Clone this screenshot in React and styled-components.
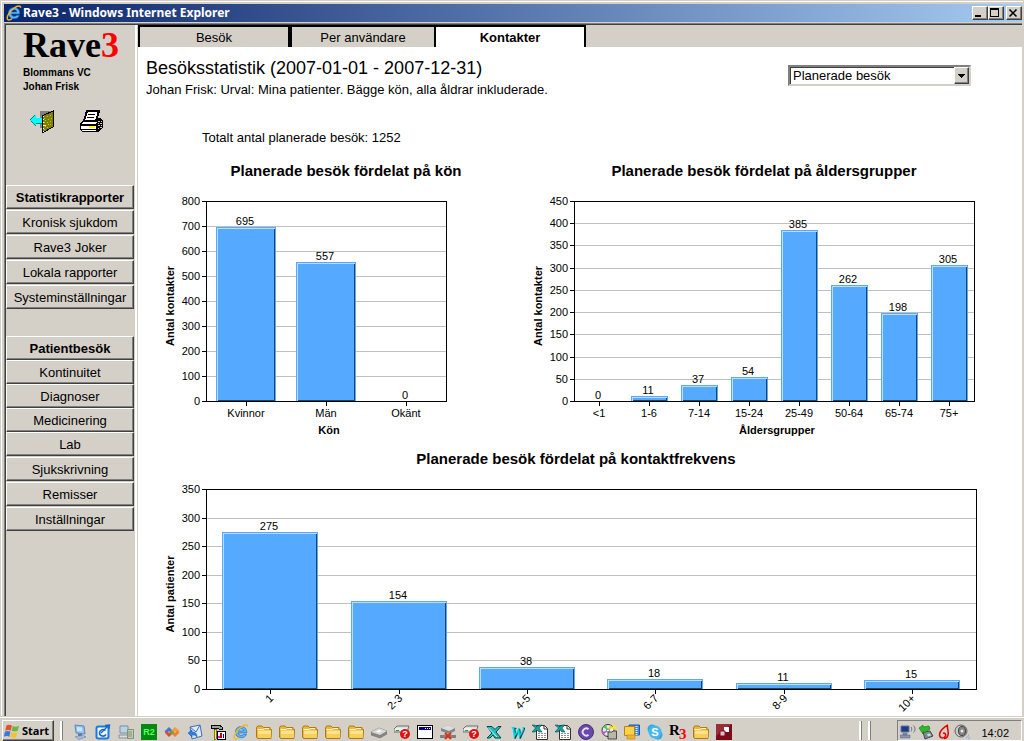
import React, { useState } from "react";
import styled, { createGlobalStyle } from "styled-components";

const sexData = [
  ["Kvinnor", 695],
  ["Män", 557],
  ["Okänt", 0],
];

const ageData = [
  ["<1", 0],
  ["1-6", 11],
  ["7-14", 37],
  ["15-24", 54],
  ["25-49", 385],
  ["50-64", 262],
  ["65-74", 198],
  ["75+", 305],
];

const frequencyData = [
  ["1", 275],
  ["2-3", 154],
  ["4-5", 38],
  ["6-7", 18],
  ["8-9", 11],
  ["10+", 15],
];

const reportLinks = [
  { label: "Kronisk sjukdom" },
  { label: "Rave3 Joker" },
  { label: "Lokala rapporter" },
  { label: "Systeminställningar" },
];

const visitLinks = [
  { label: "Kontinuitet", tight: true },
  { label: "Diagnoser", tight: true },
  { label: "Medicinering", tight: true },
  { label: "Lab" },
  { label: "Sjukskrivning" },
  { label: "Remisser" },
  { label: "Inställningar" },
];

const tabs = ["Besök", "Per användare", "Kontakter"];

function BarChart({
  title,
  titleX,
  xLabel,
  yLabel,
  data,
  max,
  step,
  width,
  plotWidth,
  rotate,
}) {
  const left = 46;
  const top = 46;
  const bottom = 246;
  const slot = plotWidth / data.length;
  const barWidth = Math.floor(slot * 0.75);
  const toY = (value) => Math.round(bottom - (value / max) * 200);

  const ticks = [];
  for (let value = 0; value <= max; value += step) ticks.push(value);

  return (
    <ChartSvg width={width} height="288" role="img" aria-label={title}>
      <ChartTitle x={titleX} y="21">
        {title}
      </ChartTitle>
      <AxisTitle transform="translate(14 151) rotate(-90)">{yLabel}</AxisTitle>
      {ticks.map((value) => (
        <g key={value} shapeRendering="crispEdges">
          <rect x={left} y={toY(value)} width={plotWidth} height="1" fill="#c0c0c0" />
          <rect x={left - 4} y={toY(value)} width="4" height="1" />
          <TickText x={left - 6} y={toY(value) + 4} $anchor="end">
            {value}
          </TickText>
        </g>
      ))}
      {data.map(([label, value], i) => {
        const center = Math.round(left + slot * (i + 0.5));
        const x = center - Math.floor(barWidth / 2);
        const y = toY(value);
        const h = bottom - y;
        return (
          <g key={label} shapeRendering="crispEdges">
            {value > 0 && (
              <>
                <rect x={x} y={y} width={barWidth} height={h} fill="#55aaff" />
                <rect x={x + 1} y={y + 1} width={barWidth - 2} height="1" fill="#bbddff" />
                <rect x={x + 1} y={y + 1} width="1" height={h - 1} fill="#bbddff" />
                <rect x={x + 2} y={bottom - 1} width={barWidth - 3} height="1" fill="#224466" />
                <rect x={x + barWidth - 2} y={y + 2} width="1" height={h - 2} fill="#224466" />
              </>
            )}
            <rect x={center} y={bottom} width="1" height="5" />
            <TickText x={center - 1} y={y - 2}>
              {value}
            </TickText>
            {rotate ? (
              <TickText
                transform={`translate(${center + 4} ${bottom + 10}) rotate(-45)`}
                $anchor="end"
              >
                {label}
              </TickText>
            ) : (
              <TickText x={center} y={bottom + 16}>
                {label}
              </TickText>
            )}
          </g>
        );
      })}
      <rect
        x={left + 0.5}
        y={top + 0.5}
        width={plotWidth}
        height="200"
        fill="none"
        stroke="#000"
      />
      {xLabel && (
        <AxisTitle x={left + plotWidth / 2 + 3} y="279">
          {xLabel}
        </AxisTitle>
      )}
    </ChartSvg>
  );
}

const IeIcon = () => (
  <svg width="16" height="16" viewBox="0 0 16 16">
    <path
      d="M13.8 9H5.400c.2 1.500 1.300 2.300 2.900 2.300 1.100 0 1.900-.3 2.400-1h2.800c-.8 2.200-2.700 3.500-5.300 3.500-3.500 0-5.800-2.300-5.800-5.600 0-3.400 2.400-5.700 5.800-5.700 3.600 0 5.800 2.500 5.600 6.500zM5.500 6.900h5.300C10.600 5.500 9.600 4.800 8.200 4.800S5.800 5.600 5.500 6.900z"
      fill="#5ab4f8"
      stroke="#0f62b8"
      strokeWidth=".6"
    />
    <path
      d="M2.200 14.800C-.6 13.500 3 6.500 8.200 3 11.500.7 14.800.3 14.600 2.700"
      fill="none"
      stroke="#f4b52c"
      strokeWidth="1.500"
    />
    <path d="M2.200 14.800c1.200.4 2.600-.2 4-1.300" fill="none" stroke="#f4b52c" strokeWidth="1.500" />
  </svg>
);

const ExitIcon = () => (
  <svg width="24" height="24" viewBox="0 0 24 24" shapeRendering="crispEdges">
    <path d="M10 1h13v17H10z" fill="#808080" />
    <path d="M12 6l11-5v16l-11 6z" fill="#808000" stroke="#000" />
    <path
      d="M14 8h1v1h-1zM17 6h1v1h-1zM20 5h1v1h-1zM15 10h1v1h-1zM18 9h1v1h-1zM21 8h1v1h-1zM14 12h1v1h-1zM17 12h1v1h-1zM20 11h1v1h-1zM15 16h1v1h-1zM18 14h1v1h-1zM20 14h1v1h-1zM14 19h1v1h-1zM17 17h1v1h-1z"
      fill="#c0c040"
    />
    <path d="M13 6v16" stroke="#fff" strokeDasharray="1 2" />
    <path d="M0 10l6-6v4h6v5H6v4z" fill="#0ff" />
    <path d="M0 10l5-5M1 11l5 5M6 13h6" stroke="#008080" fill="none" />
    <path d="M14 15h2" stroke="#ff0" />
  </svg>
);

const PrinterIcon = () => (
  <svg width="25" height="24" viewBox="0 0 25 24" shapeRendering="crispEdges">
    <path d="M8 1h12l-1 3-2 7H5z" fill="#fff" stroke="#000" strokeWidth="2" />
    <path d="M9 4h7M8 7h7M7 10h7" stroke="#000" />
    <path d="M4 10L1 13v7l2 2h16l5-4v-7l-3-3h-3l-2 4H4z" fill="#000" />
    <path d="M4 12h14l-2 2H2zM2 16h15v3H2zM3 20h14v1H3z" fill="#fff" />
    <path
      d="M19 11h2v1h-2zM21 13h2v1h-2zM19 13h1v1h-1zM19 15h2v1h-2zM21 17h2v1h-2zM19 18h1v1h-1zM22 11h1v1h-1zM22 15h1v1h-1z"
      fill="#d4d0c8"
    />
    <path d="M10 16h6v2h-6z" fill="#ff0" />
  </svg>
);

const WindowsFlag = () => (
  <svg width="16" height="16" viewBox="0 0 16 16">
    <path d="M2.500 2.500c2-1.200 3.700-1 5.500 0L6.700 7.700C5 6.700 3.500 6.600 1.200 7.700z" fill="#e8502a" />
    <path d="M8.800 3c2 1 4 .8 6.200-.2l-1.300 5c-2.200 1-4 1-6.100 0z" fill="#6bb83a" />
    <path d="M1 8.600c2.200-1 3.800-.8 5.500.1l-1.200 5c-1.700-1-3.400-1-5.500 0z" fill="#3c78dc" />
    <path d="M7.400 9.200c2 1 3.900 1 6.100 0l-1.200 5c-2.200 1-4 .9-6.100-.1z" fill="#f6c22c" />
  </svg>
);

const FolderIcon = () => (
  <svg width="16" height="16" viewBox="0 0 16 16">
    <path d="M.5 4l1-2h4.500l1.500 1.500h6.500v2h1.500L15 14.500H1.500L.5 13z" fill="#e8b93f" stroke="#b07a10" />
    <path d="M2 6.500h13L14.500 14H2z" fill="#fde48c" />
    <path d="M2 10h12.800l-.3 4H2z" fill="#f6cf60" />
    <path d="M1.500 5.500H7L8.500 4.500H13" stroke="#fff5c8" fill="none" />
  </svg>
);

const DesktopIcon = () => (
  <svg width="16" height="16" viewBox="0 0 16 16">
    <path d="M3 1l9 1 1 8-9-1z" fill="#8fc1f4" stroke="#5f83bd" />
    <path d="M5 3l5 .5.500 4L5 7z" fill="#cfe6ff" />
    <path d="M6 10h4v2H6z" fill="#5678a8" />
    <path d="M3 12.500l8-1 3 1.500-7 2.500z" fill="#a8c0e0" stroke="#6a82aa" strokeWidth=".6" />
  </svg>
);

const OutlookIcon = () => (
  <svg width="16" height="16" viewBox="0 0 16 16">
    <rect x="1.500" y="2.500" width="12" height="12" rx="2" fill="#eef6ff" stroke="#1c7ad8" strokeWidth="2" />
    <path d="M10.500 6.500C8 4.500 4.500 6 4.500 9c0 3.500 5 4 6.500 1.500" fill="none" stroke="#1668c0" strokeWidth="1.600" />
    <path d="M6 9l7-7M10 1.500l4.500-.5L14 5" fill="none" stroke="#1668c0" strokeWidth="1.400" />
  </svg>
);

const ComputerIcon = () => (
  <svg width="16" height="16" viewBox="0 0 16 16">
    <path d="M2 2h8v7H2z" fill="#b9d3e6" stroke="#7d8fa0" />
    <path d="M1 11h9v3H1z" fill="#d9dde0" stroke="#8b8f94" />
    <path d="M9.500 5.500h6v9h-6z" fill="#c5cbb8" stroke="#85907c" />
    <path d="M11 7v6M13 7v6" stroke="#7c9a6c" />
  </svg>
);

const R2Icon = () => (
  <svg width="16" height="16" viewBox="0 0 16 16">
    <rect width="16" height="16" fill="#008a10" />
    <IconText x="8" y="11" fill="#5cff5c" $size={9}>
      R2
    </IconText>
  </svg>
);

const RibbonIcon = () => (
  <svg width="16" height="16" viewBox="0 0 16 16">
    <path d="M1.500 8.500L5 5l3 3" fill="none" stroke="#3f78d0" strokeWidth="3" />
    <path d="M2 8l3 3 3-3" fill="none" stroke="#e04838" strokeWidth="3" />
    <path d="M7.500 8.500L11 5l3.500 3" fill="none" stroke="#f0a030" strokeWidth="3" />
    <path d="M8 8l3 3 3.500-3.500" fill="none" stroke="#f08030" strokeWidth="3" />
    <path d="M6.500 10L9 7.500" stroke="#58a848" strokeWidth="2.500" />
  </svg>
);

const MailSyncIcon = () => (
  <svg width="16" height="16" viewBox="0 0 16 16">
    <path d="M3 3l10-2 2 11-10 3z" fill="#dceaff" stroke="#3a70c0" />
    <path d="M3 3l6 5 4-7" fill="none" stroke="#3a70c0" />
    <path d="M1 9l4-3v2c3 0 5 1 5 5-1-2-3-2-5-2v2z" fill="#2f7ee0" stroke="#1a50a0" strokeWidth=".5" />
  </svg>
);

const ToolsIcon = () => (
  <svg width="16" height="16" viewBox="0 0 16 16" shapeRendering="crispEdges">
    <path d="M1 1h8l3 2v2H9L8 4H1z" fill="#a0a0a0" stroke="#000" />
    <path d="M4 5h2v10H4z" fill="#ff0" stroke="#000" strokeWidth=".5" />
    <path d="M7 7h8v8H7z" fill="#fff" stroke="#000" />
    <path d="M8 12h2v2H8z" fill="#f0f" />
    <path d="M10 9h2v5h-2z" fill="#c00000" />
    <path d="M13 10h1v4h-1z" fill="#00f" />
  </svg>
);

const DriveIcon = () => (
  <svg width="16" height="16" viewBox="0 0 16 16">
    <path d="M0 8l8-4 8 3v3l-7 4-9-3z" fill="#858585" stroke="#6a6a6a" strokeWidth=".5" />
    <path d="M0 8l8-4 8 3-7 4z" fill="#d8d8d8" />
    <path d="M5 7.500l3-1.500 3 1-3 1.500z" fill="#fafafa" />
  </svg>
);

const DriveUnknownIcon = () => (
  <svg width="16" height="16" viewBox="0 0 16 16">
    <path d="M0 5l3-3h12l-1 3v3H0z" fill="#dedede" stroke="#707070" />
    <path d="M1 5h12" stroke="#fff" />
    <path d="M2 6.500h3" stroke="#20a020" />
    <circle cx="11" cy="10" r="5" fill="#e01010" />
    <IconText x="11" y="13" fill="#fff" $size={9}>
      ?
    </IconText>
  </svg>
);

const DriveOffIcon = () => (
  <svg width="16" height="16" viewBox="0 0 16 16">
    <path d="M1 4l7-3 7 3v3l-6 3-8-3z" fill="#858585" />
    <path d="M1 4l7-3 7 3-6 3z" fill="#dcdcdc" />
    <path d="M0 12.500h16" stroke="#808080" strokeWidth="3" />
    <path d="M5 9l6 6M11 9l-6 6" stroke="#e03010" strokeWidth="2" />
  </svg>
);

const WindowIcon = () => (
  <svg width="16" height="16" viewBox="0 0 16 16" shapeRendering="crispEdges">
    <path d="M0 1h16v14H0z" />
    <path d="M1 2h14v12H1z" fill="#fff" />
    <path d="M2 3h12v3H2z" fill="#000080" />
    <path d="M8 4h1v1H8zM10 4h1v1h-1zM12 4h1v1h-1z" fill="#fff" />
  </svg>
);

const ExcelIcon = () => (
  <svg width="16" height="16" viewBox="0 0 16 16">
    <path d="M1 2.500h5l3 3 3-3h3L10 8l5 6h-6l-2-3-3 3H1l5-5z" fill="#20c0c0" stroke="#004848" />
    <path d="M2 3.500l9 9.500" stroke="#a8ffff" />
  </svg>
);

const WordIcon = () => (
  <svg width="16" height="16" viewBox="0 0 16 16">
    <WordLetter x="9" y="15" fill="#003c3c">
      W
    </WordLetter>
    <WordLetter x="8" y="14" fill="#00d8e8">
      W
    </WordLetter>
  </svg>
);

const SheetIcon = () => (
  <svg width="16" height="16" viewBox="0 0 16 16">
    <path d="M4.500 1.500h8l3 3v11h-11z" fill="#fff" stroke="#303030" />
    <path d="M12 1.500V5h3.500" fill="none" stroke="#303030" />
    <path d="M6 9.500h8M6 11.500h8M6 13.500h8" stroke="#909090" strokeDasharray="2 1" />
    <path d="M0 1h3l2 2 2-2h3L7 4l3 4H7L5 6 3 8H0l3.500-4z" fill="#10a0a0" stroke="#003838" strokeWidth=".5" />
  </svg>
);

const CIcon = () => (
  <svg width="16" height="16" viewBox="0 0 16 16">
    <circle cx="8" cy="8" r="7.500" fill="#6848a8" stroke="#48307c" />
    <path d="M10.500 5.200A3.600 3.600 0 1 0 10.500 10.800" fill="none" stroke="#e8dcff" strokeWidth="1.800" />
  </svg>
);

const DiscIcon = () => (
  <svg width="16" height="16" viewBox="0 0 16 16">
    <circle cx="7" cy="6.500" r="6" fill="#e8e8e8" stroke="#303030" />
    <path d="M7 6.500L2 3l3-2.500z" fill="#40d060" />
    <path d="M7 6.500L1 8l1 3z" fill="#c050e0" />
    <path d="M7 6.500L9 1l3 2z" fill="#f0d020" />
    <circle cx="7" cy="6.500" r="1.500" fill="#fff" stroke="#303030" strokeWidth=".6" />
    <path d="M7 8h4l1-1h3.500v8H7z" fill="#b8b8a8" stroke="#303030" strokeWidth=".8" />
    <path d="M13 1v5M10.500 3.500h5" stroke="#ffe818" strokeWidth="1.500" />
  </svg>
);

const ZipIcon = () => (
  <svg width="16" height="16" viewBox="0 0 16 16">
    <path d="M5 1h10.500v10H5z" fill="#3f8be8" stroke="#1c58a8" />
    <path d="M.5 2.500h10v9H.5z" fill="#fbd04c" stroke="#b88410" />
    <path d="M3 11h8v4H3z" fill="#f3b428" stroke="#b88410" strokeWidth=".6" />
    <path d="M12.500 2v9" stroke="#e0e8f4" strokeWidth="2" strokeDasharray="1 1" />
  </svg>
);

const SkypeIcon = () => (
  <svg width="16" height="16" viewBox="0 0 16 16">
    <circle cx="5" cy="5" r="4.500" fill="#35a8ea" />
    <circle cx="11" cy="11" r="4.500" fill="#35a8ea" />
    <circle cx="8" cy="8" r="6.500" fill="#45b8f4" />
    <IconText x="8" y="12" fill="#fff" $size={11}>
      S
    </IconText>
  </svg>
);

const R3Icon = () => (
  <svg width="18" height="16" viewBox="0 0 18 16">
    <SerifLetter x="0" y="11" fill="#000">
      R
    </SerifLetter>
    <SerifLetter x="10" y="15" fill="#f00">
      3
    </SerifLetter>
  </svg>
);

const SquaresIcon = () => (
  <svg width="16" height="16" viewBox="0 0 16 16">
    <rect width="16" height="16" fill="#7c0c18" />
    <path d="M0 0h16L0 12z" fill="#98303a" />
    <path d="M8 3h5v5H8z" fill="#fff" />
    <path d="M4 7h5v5H4z" fill="#d8c4c8" stroke="#7c0c18" />
  </svg>
);

const NetworkIcon = () => (
  <svg width="16" height="16" viewBox="0 0 16 16">
    <path d="M1 2h8v6H1z" fill="#1c3c90" stroke="#6a7890" />
    <path d="M3 9h4v2H3zM0 11h10v3H0z" fill="#8898b0" stroke="#506080" strokeWidth=".5" />
    <path d="M11 3c1 1.500 1 3 0 4.500M13.500 1.500c2 2 2 5 0 7" fill="none" stroke="#707070" />
  </svg>
);

const PlugIcon = () => (
  <svg width="16" height="16" viewBox="0 0 16 16">
    <path d="M5 8l7-1 3 5-8 3z" fill="#808890" stroke="#404850" />
    <path d="M9 10l3-.5 1 2-3 1z" fill="#d0d8e0" />
    <path d="M1 4l4-3v2l6-1 1 3-4 3-3 0v2z" fill="#30b828" stroke="#187010" strokeWidth=".6" />
  </svg>
);

const FlameIcon = () => (
  <svg width="16" height="16" viewBox="0 0 16 16">
    <path
      d="M12 1C8 3 3.500 7 3.500 10.500c0 4 4.500 4.500 6 1.500.8-2-1-3.500-2.500-2.500M11.500 1.500c-.5 3 1.500 6 .5 9.500-.5 2-2 3.500-4 3.500"
      fill="none"
      stroke="#e00000"
      strokeWidth="1.500"
    />
  </svg>
);

const SpeakerIcon = () => (
  <svg width="16" height="16" viewBox="0 0 16 16">
    <circle cx="7" cy="7" r="6" fill="#c8c8c8" stroke="#606060" />
    <ellipse cx="8" cy="7" rx="3.500" ry="4.500" fill="#888" stroke="#404040" />
    <circle cx="8" cy="7" r="1.500" fill="#e8e8e8" />
    <path d="M12 14c1.500-.5 2.500-2 2.500-3.500M14 15.500c1-.5 2-2 2-3" fill="none" stroke="#88a0f0" />
  </svg>
);

const quickLaunch = [
  ["Skrivbord", DesktopIcon],
  ["Outlook", OutlookIcon],
  ["Dator", ComputerIcon],
  ["R2", R2Icon],
  ["Office", RibbonIcon],
  ["Post", MailSyncIcon],
  ["Verktyg", ToolsIcon],
  ["Internet Explorer", IeIcon],
  ["Mapp 1", FolderIcon],
  ["Mapp 2", FolderIcon],
  ["Mapp 3", FolderIcon],
  ["Mapp 4", FolderIcon],
  ["Mapp 5", FolderIcon],
  ["Enhet", DriveIcon],
  ["Okänd enhet 1", DriveUnknownIcon],
  ["Fönster", WindowIcon],
  ["Frånkopplad enhet", DriveOffIcon],
  ["Okänd enhet 2", DriveUnknownIcon],
  ["Excel", ExcelIcon],
  ["Word", WordIcon],
  ["Kalkylblad 1", SheetIcon],
  ["Kalkylblad 2", SheetIcon],
  ["C", CIcon],
  ["Skiva", DiscIcon],
  ["Arkiv", ZipIcon],
  ["Skype", SkypeIcon],
  ["Rave3", R3Icon],
  ["Mapp 6", FolderIcon],
  ["Citrix", SquaresIcon],
];

function Sidebar() {
  return (
    <SidePanel>
      <Brand>
        <Logo>
          Rave<span>3</span>
        </Logo>
        <Account>
          Blommans VC
          <br />
          Johan Frisk
        </Account>
      </Brand>
      <Tools>
        <IconButton aria-label="Logga ut">
          <ExitIcon />
        </IconButton>
        <IconButton aria-label="Skriv ut">
          <PrinterIcon />
        </IconButton>
      </Tools>
      <MenuGroup>
        <MenuButton $bold>Statistikrapporter</MenuButton>
        {reportLinks.map((item) => (
          <MenuButton key={item.label}>{item.label}</MenuButton>
        ))}
      </MenuGroup>
      <MenuGroup>
        <MenuButton $bold $tight>
          Patientbesök
        </MenuButton>
        {visitLinks.map((item) => (
          <MenuButton key={item.label} $tight={item.tight}>
            {item.label}
          </MenuButton>
        ))}
      </MenuGroup>
    </SidePanel>
  );
}

function Taskbar() {
  return (
    <Bar>
      <StartButton>
        <WindowsFlag />
        Start
      </StartButton>
      <Handle />
      <QuickLaunch>
        {quickLaunch.map(([name, Icon]) => (
          <IconButton key={name} aria-label={name}>
            <Icon />
          </IconButton>
        ))}
      </QuickLaunch>
      <Handle />
      <Handle />
      <Tray>
        <NetworkIcon />
        <PlugIcon />
        <FlameIcon />
        <SpeakerIcon />
        <Clock>14:02</Clock>
      </Tray>
    </Bar>
  );
}

function App() {
  const [activeTab, setActiveTab] = useState("Kontakter");

  return (
    <Screen>
      <GlobalStyle />
      <Window>
        <TitleBar>
          <IeIcon />
          <TitleText>Rave3 - Windows Internet Explorer</TitleText>
          <CaptionButton aria-label="Minimera">
            <svg width="12" height="10" shapeRendering="crispEdges">
              <path d="M2 7h6v2H2z" />
            </svg>
          </CaptionButton>
          <CaptionButton aria-label="Maximera">
            <svg width="12" height="10" shapeRendering="crispEdges">
              <path d="M1 0h9v9H1zM2 2v6h7V2z" fillRule="evenodd" />
            </svg>
          </CaptionButton>
          <CaptionButton aria-label="Stäng" $apart>
            <svg width="12" height="10">
              <path d="M2.500 1.500l7 7M9.500 1.500l-7 7" stroke="#000" strokeWidth="1.600" />
            </svg>
          </CaptionButton>
        </TitleBar>
        <Viewport>
          <Sidebar />
          <Main>
            <TabStrip role="tablist">
              {tabs.map((tab) => (
                <Tab
                  key={tab}
                  role="tab"
                  aria-selected={tab === activeTab}
                  $active={tab === activeTab}
                  onClick={() => setActiveTab(tab)}
                >
                  {tab}
                </Tab>
              ))}
            </TabStrip>
            <Header>
              <div>
                <Heading>Besöksstatistik (2007-01-01 - 2007-12-31)</Heading>
                <Selection>
                  Johan Frisk: Urval: Mina patienter. Bägge kön, alla åldrar inkluderade.
                </Selection>
              </div>
              <SelectBox>
                <Select aria-label="Besökstyp" defaultValue="Planerade besök">
                  <option>Planerade besök</option>
                </Select>
                <SelectArrow>
                  <svg width="7" height="4" shapeRendering="crispEdges">
                    <path d="M0 0h7v1H6v1H5v1H4v1H3V3H2V2H1V1H0z" />
                  </svg>
                </SelectArrow>
              </SelectBox>
            </Header>
            <Total>Totalt antal planerade besök: 1252</Total>
            <Charts>
              <ChartRow>
                <BarChart
                  title="Planerade besök fördelat på kön"
                  titleX={186}
                  xLabel="Kön"
                  yLabel="Antal kontakter"
                  data={sexData}
                  max={800}
                  step={100}
                  width={320}
                  plotWidth={240}
                />
                <BarChart
                  title="Planerade besök fördelat på åldersgrupper"
                  titleX={236}
                  xLabel="Åldersgrupper"
                  yLabel="Antal kontakter"
                  data={ageData}
                  max={450}
                  step={50}
                  width={460}
                  plotWidth={400}
                />
              </ChartRow>
              <BarChart
                title="Planerade besök fördelat på kontaktfrekvens"
                titleX={416}
                yLabel="Antal patienter"
                data={frequencyData}
                max={350}
                step={50}
                width={828}
                plotWidth={770}
                rotate
              />
            </Charts>
          </Main>
        </Viewport>
      </Window>
      <Taskbar />
    </Screen>
  );
}

export default App;

const GlobalStyle = createGlobalStyle`
  * {
    box-sizing: border-box;
  }
  body {
    margin: 0;
    background: #d4d0c8;
    color: #000;
    font-family: "Liberation Sans", Arial, sans-serif;
    font-size: 13px;
  }
  button {
    font: inherit;
    color: inherit;
  }
  svg {
    display: block;
    flex: none;
  }
`;

const Screen = styled.div`
  display: flex;
  flex-direction: column;
  height: 100vh;
`;

const Window = styled.div`
  display: flex;
  flex-direction: column;
  flex: 1;
  min-height: 0;
  padding: 3px 1px 0 3px;
  border: solid #d4d0c8;
  border-width: 1px 1px 0 1px;
  box-shadow: inset 1px 1px 0 #fff;
`;

const TitleBar = styled.div`
  display: flex;
  align-items: center;
  height: 18px;
  flex: none;
  padding: 0 0 0 2px;
  background: linear-gradient(to right, #0a246a, #a6caf0);
`;

const TitleText = styled.div`
  flex: 1;
  padding-left: 1px;
  color: #fff;
  font-family: "Noto Sans", sans-serif;
  font-size: 12px;
  line-height: 18px;
  font-weight: 700;
`;

const CaptionButton = styled.button`
  width: 16px;
  height: 14px;
  padding: 0;
  margin-left: ${(props) => (props.$apart ? "2px" : "0")};
  background: #d4d0c8;
  border: 1px solid;
  border-color: #fff #404040 #404040 #fff;
  box-shadow: inset -1px -1px 0 #808080;
`;

const Viewport = styled.div`
  display: flex;
  flex: 1;
  min-height: 0;
  margin-top: 1px;
  border: solid #808080;
  border-width: 1px 0 0 1px;
  box-shadow: inset 1px 1px 0 #404040;
  padding: 1px 0 0 1px;
`;

const SidePanel = styled.nav`
  width: 132px;
  flex: none;
  border-right: 1px solid #d4d0c8;
  box-shadow: inset -2px 0 0 #fff;
  overflow: hidden;
`;

const Brand = styled.div`
  padding: 0 0 0 17px;
`;

const Logo = styled.div`
  font-family: "Liberation Serif", "Times New Roman", serif;
  font-size: 36px;
  line-height: 41px;
  font-weight: 700;

  span {
    color: #f00;
  }
`;

const Account = styled.div`
  font-size: 10px;
  line-height: 14px;
  font-weight: 700;
`;

const Tools = styled.div`
  display: flex;
  gap: 25px;
  padding: 16px 24px 0;
  height: 91px;
`;

const IconButton = styled.button`
  display: flex;
  align-items: center;
  justify-content: center;
  min-width: 16px;
  height: fit-content;
  padding: 0;
  border: 0;
  background: none;
`;

const MenuGroup = styled.div`
  display: flex;
  flex-direction: column;
  margin-bottom: 26px;
`;

const MenuButton = styled.button`
  height: 24px;
  width: 128px;
  margin-bottom: ${(props) => (props.$tight ? "0" : "1px")};
  padding: 0;
  background: #d4d0c8;
  border: 1px solid;
  border-color: #fff #404040 #404040 #fff;
  box-shadow: inset -1px -1px 0 #808080;
  font-weight: ${(props) => (props.$bold ? 700 : 400)};
  white-space: nowrap;
`;

const Main = styled.main`
  flex: 1;
  min-width: 0;
  overflow: hidden;
  background: #fff;
`;

const TabStrip = styled.div`
  display: flex;
  background: #d4d0c8;
`;

const Tab = styled.button`
  width: 152px;
  height: 22px;
  padding: 0;
  border: solid #000;
  border-width: 2px 2px 0 2px;
  background: ${(props) => (props.$active ? "#fff" : "#d4d0c8")};
  font-weight: ${(props) => (props.$active ? 700 : 400)};

  &:nth-child(2) {
    width: 144px;
    border-right-width: 0;
  }
`;

const Header = styled.header`
  display: flex;
  justify-content: space-between;
  align-items: center;
  padding: 10px 51px 0 8px;
`;

const Heading = styled.h1`
  margin: 0;
  font-size: 18px;
  line-height: 22px;
  font-weight: 400;
`;

const Selection = styled.p`
  margin: 0;
  line-height: 21px;
`;

const Total = styled.p`
  margin: 0;
  padding: 27px 0 0 64px;
  line-height: 21px;
`;

const SelectBox = styled.div`
  position: relative;
  width: 183px;
  margin-bottom: 6px;
`;

const Select = styled.select`
  display: block;
  width: 100%;
  height: 21px;
  padding: 0 20px 0 3px;
  appearance: none;
  background: #fff;
  border: 2px solid;
  border-color: #808080 #d4d0c8 #d4d0c8 #808080;
  border-radius: 0;
  box-shadow: inset 1px 1px 0 #404040;
  color: #000;
  font: inherit;
`;

/* drawn over the select's own arrow */
const SelectArrow = styled.span`
  position: absolute;
  top: 2px;
  right: 2px;
  display: flex;
  align-items: center;
  justify-content: center;
  width: 15px;
  height: 17px;
  background: #d4d0c8;
  border: 1px solid;
  border-color: #fff #404040 #404040 #fff;
  box-shadow: inset -1px -1px 0 #808080;
  pointer-events: none;
`;

const Charts = styled.div`
  padding: 7px 0 0 22px;
`;

const ChartRow = styled.div`
  display: flex;
  gap: 48px;
`;

const ChartSvg = styled.svg`
  overflow: visible;
`;

const ChartTitle = styled.text`
  font-size: 15px;
  font-weight: 700;
  text-anchor: middle;
`;

const AxisTitle = styled.text`
  font-size: 11px;
  font-weight: 700;
  text-anchor: middle;
`;

const TickText = styled.text`
  font-size: 11px;
  text-anchor: ${(props) => props.$anchor || "middle"};
`;

const IconText = styled.text`
  font-size: ${(props) => props.$size}px;
  font-weight: 700;
  text-anchor: middle;
`;

const WordLetter = styled.text`
  font-family: "Liberation Serif", serif;
  font-size: 16px;
  font-weight: 700;
  font-style: italic;
  text-anchor: middle;
`;

const SerifLetter = styled.text`
  font-family: "Liberation Serif", serif;
  font-size: 15px;
  font-weight: 700;
`;

const Bar = styled.footer`
  display: flex;
  align-items: center;
  height: 25px;
  flex: none;
  padding: 3px 2px 0;
  background: #d4d0c8;
  border-top: 1px solid #d4d0c8;
  box-shadow: inset 0 1px 0 #fff;
`;

const StartButton = styled.button`
  display: flex;
  align-items: center;
  gap: 2px;
  width: 52px;
  height: 21px;
  padding: 0 0 0 1px;
  background: #d4d0c8;
  border: 1px solid;
  border-color: #fff #404040 #404040 #fff;
  box-shadow: inset -1px -1px 0 #808080;
  font-family: "Noto Sans", sans-serif;
  font-size: 11px;
  font-weight: 700;
`;

const Handle = styled.div`
  width: 3px;
  height: 19px;
  margin-left: 6px;
  border: solid;
  border-width: 0 1px 0 2px;
  border-color: #fff #808080 #fff #fff;
`;

const QuickLaunch = styled.div`
  display: flex;
  flex: 1;
  gap: 7px;
  padding: 2px 0 0 9px;

  button {
    width: 16px;
  }
`;

const Tray = styled.div`
  display: flex;
  align-items: center;
  gap: 2px;
  width: 125px;
  height: 21px;
  margin-left: 26px;
  padding: 2px 12px 0 2px;
  border: 1px solid;
  border-color: #808080 #fff #fff #808080;
`;

const Clock = styled.time`
  margin-left: auto;
  padding-top: 3px;
  font-size: 11px;
  line-height: 14px;
`;
